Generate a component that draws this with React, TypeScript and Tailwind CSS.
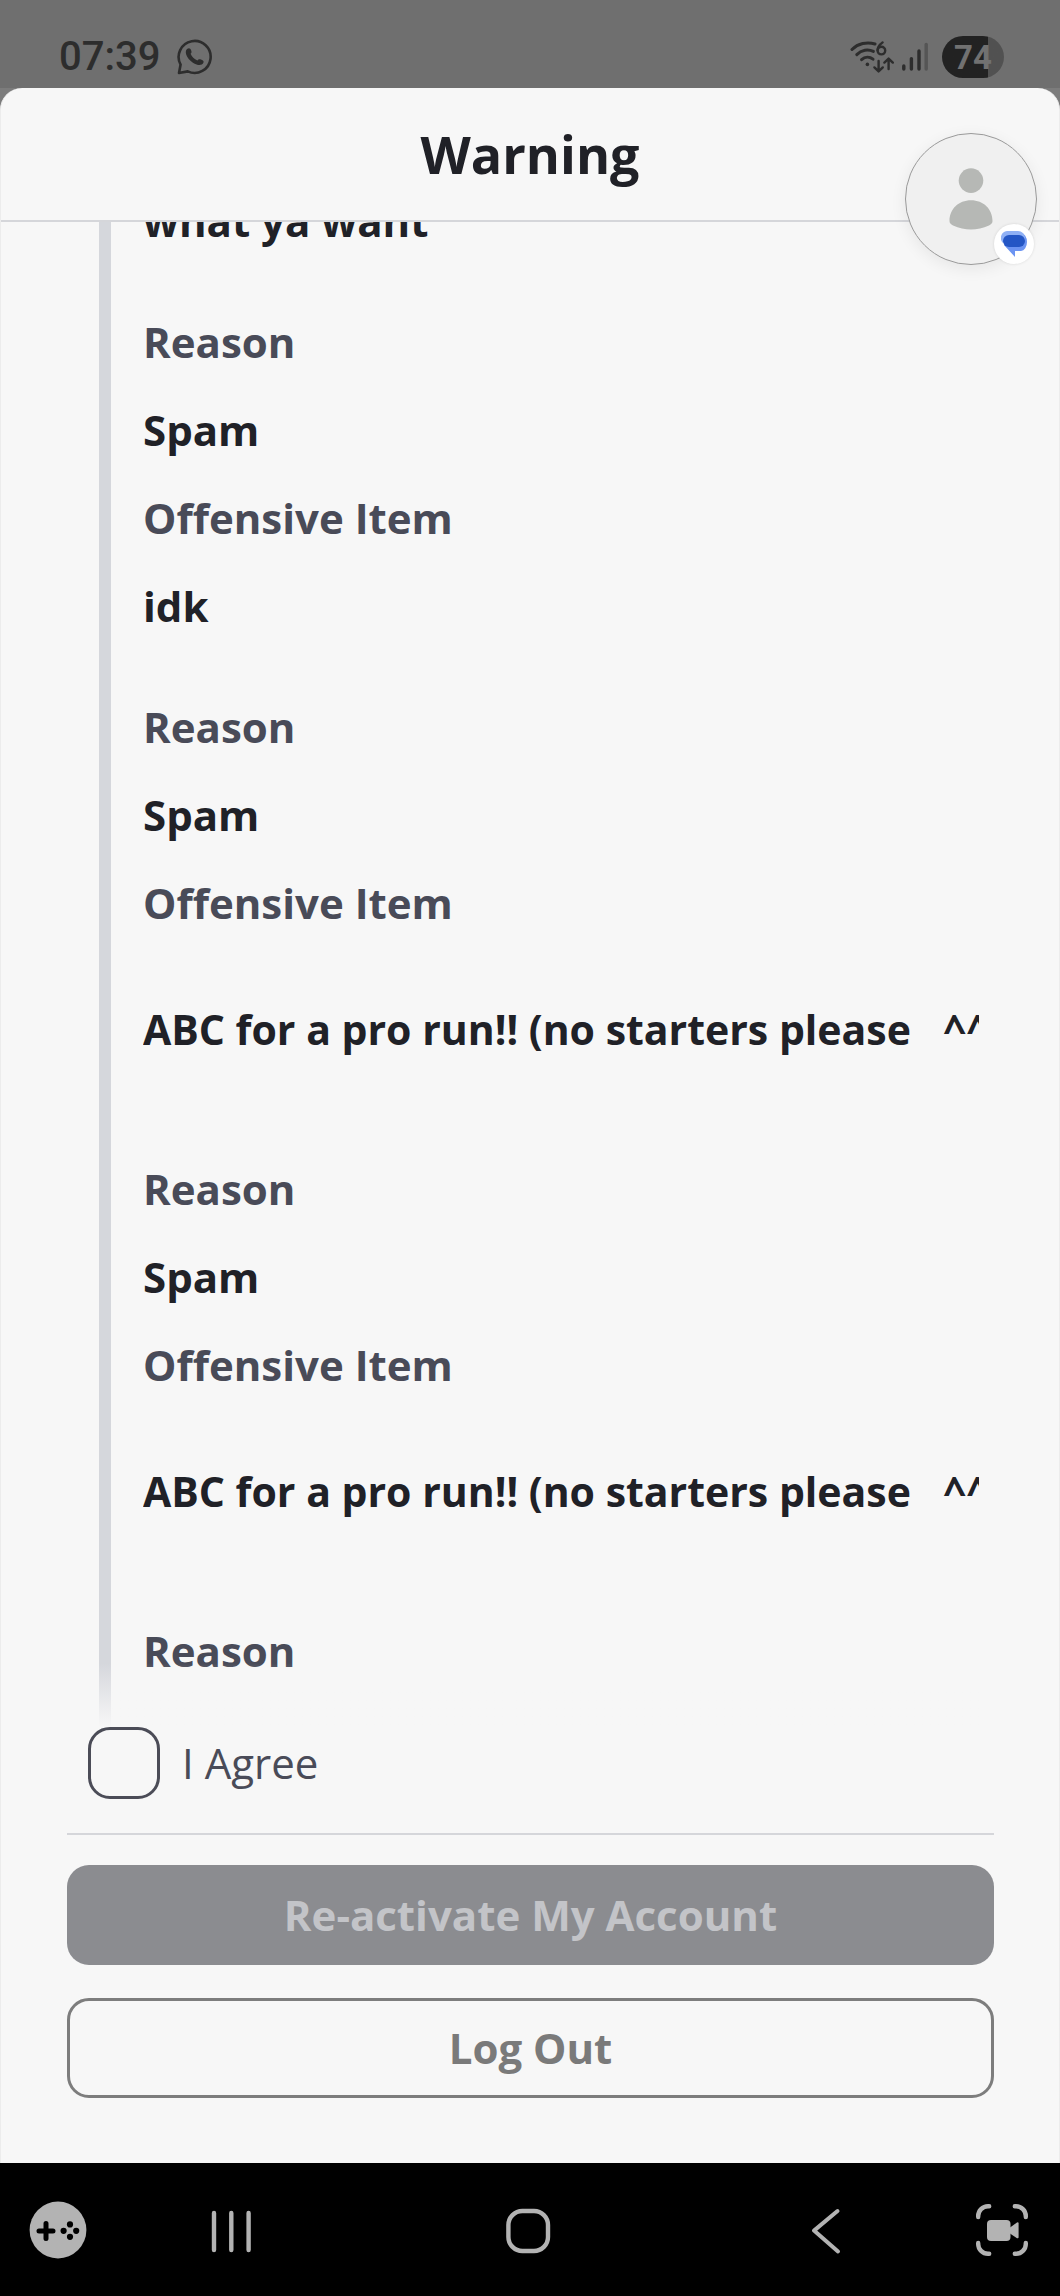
type Violation = {
  item: string
  long?: boolean
}

const violations: Violation[] = [
  { item: 'idk' },
  { item: 'ABC for a pro run!! (no starters please   ^^', long: true },
  { item: 'ABC for a pro run!! (no starters please   ^^', long: true },
]

function StatusBar() {
  return (
    <div className="flex h-[88px] shrink-0 items-center justify-between bg-[#6f6f6f] pt-[26px] pr-14 pl-[59px] text-[#2d2d2d]">
      <div className="flex items-center gap-[17px]">
        <span className="font-[Roboto] text-[40px] leading-none font-medium">07:39</span>
        <svg width="36" height="36" viewBox="0 0 36 36" fill="none">
          <path
            d="M2 34 L3.6 25.6 A16 16 0 1 1 10.8 32.4 Z"
            stroke="currentColor"
            strokeWidth="2.6"
            strokeLinejoin="round"
          />
          <path
            d="M10.4 9.8 C12 8.6 13.4 9.4 14 11 C14.8 13 14.8 13.6 13.6 14.8 C14.6 17.4 17.4 20.4 20.4 21.6 C21.6 20 22.4 19.8 24 20.6 C26.6 21.8 27 22.2 26.4 23.8 C25.4 26 22.4 26.6 19.6 25.4 C14.4 23.4 10.6 19.6 9.2 15.4 C8.4 13 8.8 11 10.4 9.8 Z"
            fill="currentColor"
          />
        </svg>
      </div>
      <div className="flex items-center">
        <svg width="44" height="36" viewBox="0 0 44 36" fill="none" stroke="currentColor" strokeLinecap="round">
          <path d="M2 10.5 C8 4.4 17 2.6 25 5" strokeWidth="3" />
          <path d="M6.8 15.6 C11.4 10.8 18 9.8 23.4 12.4" strokeWidth="3" />
          <path d="M11.6 20.6 C15 17.4 19.6 17.4 23 20.2" strokeWidth="3" />
          <circle cx="17.4" cy="25.4" r="1.8" fill="currentColor" stroke="none" />
          <path d="M32.6 3.4 C29.6 5.6 27.6 8.4 27.6 11.2" strokeWidth="2.4" />
          <circle cx="31.4" cy="11.6" r="3.8" strokeWidth="2.4" />
          <path d="M28.6 22 V32 M24.4 28.4 L28.6 32.4 L32.8 28.4" strokeWidth="2.4" strokeLinejoin="round" />
          <path d="M38.6 30 V20 M34.4 23.6 L38.6 19.6 L42.8 23.6" strokeWidth="2.4" strokeLinejoin="round" />
        </svg>
        <svg className="ml-2" width="26" height="30" viewBox="0 0 26 30" strokeWidth="3.4" strokeLinecap="round">
          <path d="M1.8 24 V27 M9.4 16.6 V27 M17 9 V27" stroke="currentColor" />
          <path d="M24.2 2.4 V27" stroke="#555555" />
        </svg>
        <span className="ml-[14px] flex h-[42px] w-[62px] items-center justify-center rounded-full bg-linear-to-r from-[#222222] from-74% to-[#515151] to-74% font-[Roboto] text-[33px] leading-none font-bold text-[#717171]">
          74
        </span>
      </div>
    </div>
  )
}

function ChatHead() {
  return (
    <button
      aria-label="Open conversation"
      className="absolute top-[45px] right-[22px] size-[132px] rounded-full border border-[#9a9a9a] bg-[#f0f0f0] shadow-[0_4px_16px_rgba(0,0,0,0.07)]"
    >
      <svg className="mx-auto" width="44" height="62" viewBox="0 0 44 62" fill="#b6b8b5">
        <circle cx="22" cy="12.6" r="12.3" />
        <path d="M0.5 53 C0.5 41 9.5 32.2 22 32.2 C34.5 32.2 43.5 41 43.5 53 Q43.5 56 40 57.4 Q22 65.4 4 57.4 Q0.5 56 0.5 53 Z" />
      </svg>
      <span className="absolute right-0.5 bottom-0 flex size-10 items-center justify-center rounded-full bg-white shadow-[0_0_3px_rgba(0,0,0,0.12)]">
        <svg width="26" height="26" viewBox="0 0 26 26">
          <path d="M8 2 H20 A6 9 0 0 1 20 20 H14 V26 L3 14 Z" fill="#6c94f2" />
          <path d="M6 0 H17 A7 7 0 0 1 24 7 V10 H4 L2 12 A7 7 0 0 1 6 0 Z" fill="#8fb0f5" />
          <rect x="2" y="4" width="22" height="12" rx="6" fill="#2456c5" />
        </svg>
      </span>
    </button>
  )
}

function ViolationBlock({ item, long }: Violation) {
  return (
    <div className="flex flex-col pb-[33px]">
      <p className="text-[#494b58]">Reason</p>
      <p>Spam</p>
      <p className="text-[#494b58]">Offensive Item</p>
      <p className={long ? 'mt-[38px] mb-[39px] overflow-hidden text-[41px] whitespace-pre' : ''}>{item}</p>
    </div>
  )
}

function NavBar() {
  return (
    <nav className="flex h-[133px] shrink-0 items-center bg-black pr-8 pl-[29px] text-[#b3b3b3]">
      <button aria-label="Game tools">
        <svg width="58" height="58" viewBox="0 0 58 58">
          <circle cx="29" cy="29" r="28.4" fill="currentColor" />
          <path d="M17 22.5 V37.5 M10 30 H24" stroke="#000" strokeWidth="5" strokeLinecap="round" />
          <g fill="#000">
            <circle cx="41" cy="23.4" r="3.1" />
            <circle cx="41" cy="35.8" r="3.1" />
            <circle cx="34.6" cy="29.8" r="3.1" />
            <circle cx="47.2" cy="29.8" r="3.1" />
          </g>
        </svg>
      </button>
      <div className="flex flex-1 items-center justify-between pr-[106px] pl-[100px]">
        <button aria-label="Recents">
          <svg width="88" height="88" viewBox="0 0 88 88" stroke="currentColor" strokeWidth="4.4" strokeLinecap="round">
            <path d="M27 27 V64 M44.3 27 V64 M61.6 27 V64" />
          </svg>
        </button>
        <button aria-label="Home">
          <svg width="88" height="88" viewBox="0 0 88 88" fill="none" stroke="currentColor" strokeWidth="4.4">
            <rect x="23.4" y="25" width="39.6" height="40" rx="14" />
          </svg>
        </button>
        <button aria-label="Back">
          <svg
            width="88"
            height="88"
            viewBox="0 0 88 88"
            fill="none"
            stroke="currentColor"
            strokeWidth="4"
            strokeLinecap="round"
            strokeLinejoin="round"
          >
            <path d="M55.5 25 L32 44.6 L56 65.4" />
          </svg>
        </button>
      </div>
      <button aria-label="Screen recorder">
        <svg width="52" height="52" viewBox="0 0 52 52" fill="none">
          <path
            d="M2.2 13 V12 A9.8 9.8 0 0 1 12 2.2 H13.2 M38.8 2.2 H40 A9.8 9.8 0 0 1 49.8 12 V13 M49.8 39 V40 A9.8 9.8 0 0 1 40 49.8 H38.8 M13.2 49.8 H12 A9.8 9.8 0 0 1 2.2 40 V39"
            stroke="currentColor"
            strokeWidth="4.4"
            strokeLinecap="round"
          />
          <rect x="11" y="16" width="23.5" height="21" rx="4" fill="currentColor" />
          <path d="M34 23.6 L41 18.4 Q42.6 17.8 42.6 19.6 V33 Q42.6 34.8 41 34.2 L34 29.6 Z" fill="currentColor" />
        </svg>
      </button>
    </nav>
  )
}

export default function App() {
  return (
    <div className="flex h-screen flex-col bg-[#7c7c7c] font-['Open_Sans',sans-serif] text-[#202127]">
      <StatusBar />
      <main className="relative flex min-h-0 flex-1 flex-col rounded-t-[22px] border-x border-[#ececec] bg-[#f7f7f7]">
        <header className="flex h-[134px] shrink-0 items-center justify-center border-b-2 border-[#d5d6da]">
          <h1 className="text-[52px] leading-none font-bold">Warning</h1>
        </header>
        <ChatHead />

        <section className="relative mr-20 ml-[98px] min-h-0 flex-1 overflow-hidden text-[42px] leading-[88px] font-bold">
          <div className="-mt-[45px] border-l-[12px] border-[#d5d7dc] pb-[88px] pl-8">
            <p className="pb-[33px]">what ya want</p>
            {violations.map((violation, i) => (
              <ViolationBlock key={i} {...violation} />
            ))}
            <p className="text-[#494b58]">Reason</p>
          </div>
          <div className="absolute inset-x-0 bottom-0 h-16 bg-linear-to-b from-transparent to-[#f7f7f7]" />
        </section>

        <footer className="shrink-0 pr-[65px] pb-[65px] pl-[66px]">
          <div className="flex items-center gap-[22px] border-b-2 border-[#d5d6da] pb-[34px] pl-[21px]">
            <input
              id="agree"
              type="checkbox"
              className="size-[72px] appearance-none rounded-[22px] border-[3px] border-[#4b4c57] checked:bg-[#4b4c57]"
            />
            <label htmlFor="agree" className="text-[42px] leading-none text-[#494b58]">
              I Agree
            </label>
          </div>
          <div className="flex flex-col gap-[33px] pt-[30px] text-[42px] leading-none font-bold">
            <button disabled className="h-[100px] rounded-[22px] bg-[#8b8c90] text-[#c3c4c8]">
              Re-activate My Account
            </button>
            <button className="h-[100px] rounded-[22px] border-[3px] border-[#7d7d7d] text-[#7a7a7a]">Log Out</button>
          </div>
        </footer>
      </main>
      <NavBar />
    </div>
  )
}
